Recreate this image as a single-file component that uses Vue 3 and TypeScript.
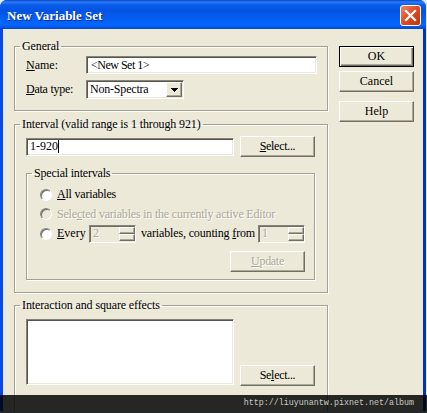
<script setup lang="ts">
import { ref } from 'vue'

const name = ref('<New Set 1>')
const dataType = ref('Non-Spectra')
const interval = ref('1-920')
const step = ref(2)
const start = ref(1)
</script>

<template>
    <div class="screen">
        <div class="dialog" role="dialog" aria-label="New Variable Set">
            <header class="titlebar">
                <span class="title">New Variable Set</span>
                <button class="close" aria-label="Close">
                    <svg width="21" height="21" viewBox="0 0 21 21">
                        <defs>
                            <linearGradient id="closeFill" x1="0" y1="0" x2="1" y2="1">
                                <stop offset="0" stop-color="#ee8d70" />
                                <stop offset="0.45" stop-color="#df4f27" />
                                <stop offset="1" stop-color="#b93409" />
                            </linearGradient>
                        </defs>
                        <rect x="0.5" y="0.5" width="20" height="20" rx="2.5" fill="url(#closeFill)" stroke="#fff" />
                        <path d="M6 6 L15 15 M15 6 L6 15" stroke="#fff" stroke-width="2.2" stroke-linecap="square" />
                    </svg>
                </button>
            </header>

            <main class="client">
                <div class="groups">
                    <fieldset class="group general">
                        <legend>General</legend>
                        <div class="row name-row">
                            <label class="label"><u>N</u>ame:</label>
                            <div class="field name-field">{{ name }}</div>
                        </div>
                        <div class="row type-row">
                            <label class="label type-label"><u>D</u>ata type:</label>
                            <div class="field combo">
                                <span class="combo-text">{{ dataType }}</span>
                                <span class="combo-button">
                                    <svg width="7" height="4" viewBox="0 0 7 4" shape-rendering="crispEdges">
                                        <path d="M0 0 H7 L3.5 4 Z" fill="#000" />
                                    </svg>
                                </span>
                            </div>
                        </div>
                    </fieldset>

                    <fieldset class="group interval">
                        <legend class="interval-legend">Interval (valid range is 1 through 921)</legend>
                        <div class="row interval-row">
                            <div class="field interval-field">{{ interval }}<i class="caret"></i></div>
                            <button class="button select"><span><u>S</u>elect...</span></button>
                        </div>

                        <fieldset class="group special">
                            <legend class="special-legend">Special intervals</legend>
                            <div class="row option">
                                <i class="radio"></i>
                                <span class="all-text"><u>A</u>ll variables</span>
                            </div>
                            <div class="row option disabled">
                                <i class="radio off"></i>
                                <span class="selected-text">Sele<u>c</u>ted variables in the currently active Editor</span>
                            </div>
                            <div class="row option">
                                <i class="radio"></i>
                                <span class="every-text"><u>E</u>very</span>
                                <div class="spinner disabled">
                                    <span>{{ step }}</span>
                                    <div class="arrows"><i></i><i></i></div>
                                </div>
                                <span class="counting-text">variables, counting <u>f</u>rom</span>
                                <div class="spinner disabled">
                                    <span>{{ start }}</span>
                                    <div class="arrows"><i></i><i></i></div>
                                </div>
                            </div>
                            <button class="button update disabled" disabled><span><u>U</u>pdate</span></button>
                        </fieldset>
                    </fieldset>

                    <fieldset class="group effects">
                        <legend class="effects-legend">Interaction and square effects</legend>
                        <div class="row effects-row">
                            <div class="field list"></div>
                            <button class="button select"><span>Se<u>l</u>ect...</span></button>
                        </div>
                    </fieldset>
                </div>

                <div class="actions">
                    <button class="button default"><span>OK</span></button>
                    <button class="button"><span>Cancel</span></button>
                    <button class="button help"><span>Help</span></button>
                </div>
            </main>
        </div>
        <footer class="watermark">http://liuyunantw.pixnet.net/album</footer>
    </div>
</template>

<style>
body {
    margin: 0;
    overflow: hidden;
}
</style>

<style scoped>
* {
    box-sizing: border-box;
}

.screen {
    position: relative;
    width: 427px;
    height: 413px;
    overflow: hidden;
    background: #dfe8f8;
    font: 12px/15px "Liberation Serif", serif;
    color: #000;
    white-space: nowrap;
}

.dialog {
    width: 426px;
    height: 411px;
    display: flex;
    flex-direction: column;
    border-radius: 7px 7px 0 0;
    overflow: hidden;
    background: #0a3fd8;
}

.titlebar {
    flex: none;
    height: 29px;
    display: flex;
    align-items: center;
    justify-content: space-between;
    padding: 2px 5px 0 7px;
    background: linear-gradient(#0842c0 0, #2a7dfa 2px, #0a5cea 5px, #0353e2 11px, #0460f5 20px, #0566ff 25px, #0347cf 29px);
}

.title {
    color: #fff;
    font-weight: bold;
    font-size: 13px;
    text-shadow: 1px 1px 0 #0a2b8c;
}

.close {
    width: 21px;
    height: 21px;
    padding: 0;
    border: 0;
    background: none;
}

.close svg {
    display: block;
}

.client {
    flex: 1;
    display: flex;
    gap: 11px;
    padding: 10px 9px 0 11px;
    margin-bottom: 2px;
    background: #ece9d8;
    border: solid #0848e8;
    border-width: 0 3px;
    border-right-color: #0530b8;
}

.groups {
    width: 314px;
}

.group {
    margin: 0;
    min-width: 0;
    padding: 0 9px 0 11px;
    border: 1px solid #a3a092;
    box-shadow: 1px 1px 0 #fff, inset 1px 1px 0 #fff;
}

legend {
    margin-left: -6px;
    padding: 0 2px;
    height: 15px;
    letter-spacing: -0.12px;
}

.general {
    height: 72px;
}

.interval {
    height: 176px;
    margin-top: 6px;
}

.effects {
    height: 130px;
    margin-top: 5px;
}

.row {
    display: flex;
    align-items: center;
}

.name-row {
    padding-top: 2px;
}

.type-row {
    padding-top: 6px;
}

.label {
    width: 60px;
}

.type-label {
    letter-spacing: -0.25px;
}

u {
    text-underline-offset: 1px;
    text-decoration-thickness: 1px;
}

.field {
    background: #fff;
    border: 1px solid;
    border-color: #85827a #fff #fff #85827a;
    box-shadow: inset 1px 1px 0 #56544c, inset -1px -1px 0 #ece9d8;
    padding: 0 4px;
    display: flex;
    align-items: center;
}

.name-field {
    width: 231px;
    height: 18px;
    letter-spacing: -0.5px;
}

.combo {
    width: 98px;
    height: 19px;
    padding: 0 1px 0 3px;
    justify-content: space-between;
}

.combo-text {
    letter-spacing: -0.2px;
}

.combo-button {
    width: 16px;
    height: 15px;
    display: flex;
    align-items: center;
    justify-content: center;
    background: #ece9d8;
    border: 1px solid;
    border-color: #fff #716f64 #716f64 #fff;
    box-shadow: inset -1px -1px 0 #aca899;
}

.interval-row {
    padding-top: 4px;
    gap: 6px;
}

.interval-field {
    width: 208px;
    height: 18px;
    padding-left: 3px;
}

.caret {
    width: 1px;
    height: 13px;
    background: #000;
}

.button {
    width: 75px;
    height: 21px;
    padding: 0;
    font: inherit;
    color: #000;
    background: #ece9d8;
    border: 1px solid;
    border-color: #fff #716f64 #716f64 #fff;
    box-shadow: inset -1px -1px 0 #aca899;
}

.button.default {
    border-color: #000;
    box-shadow: inset 1px 1px 0 #fff, inset -1px -1px 0 #716f64, inset -2px -2px 0 #aca899;
}

.select {
    letter-spacing: -0.3px;
}

.special {
    height: 114px;
    width: 289px;
    margin-top: 9px;
    padding: 0 8px 0 13px;
}

.special > legend {
    margin-left: -8px;
    letter-spacing: -0.2px;
}

.special > .option:first-of-type {
    margin-top: 4px;
}

.option {
    height: 19.5px;
}

.disabled {
    color: #aca899;
    text-shadow: 1px 1px 0 #fff;
}

.all-text {
    letter-spacing: -0.2px;
}

.selected-text {
    letter-spacing: -0.2px;
}

.radio {
    flex: none;
    width: 12px;
    height: 12px;
    margin-right: 5px;
    border-radius: 50%;
    border: 1px solid;
    border-color: #85827a #fff #fff #85827a;
    background: #fff;
    box-shadow: inset 1px 1px 0 #716f64;
}

.radio.off {
    background: #ece9d8;
}

.every-text {
    flex: none;
    width: 32px;
}

.counting-text {
    flex: none;
    width: 122px;
    padding-left: 5px;
    letter-spacing: -0.15px;
}

.spinner {
    flex: none;
    width: 47px;
    height: 18px;
    display: flex;
    justify-content: space-between;
    align-items: center;
    padding: 0 0 0 3px;
    border: 1px solid;
    border-color: #85827a #fff #fff #85827a;
    box-shadow: inset 1px 1px 0 #716f64;
}

.arrows {
    width: 16px;
    height: 14px;
    margin-top: 1px;
    display: flex;
    flex-direction: column;
}

.arrows i {
    flex: 1;
    border: 1px solid;
    border-color: #fff #716f64 #716f64 #fff;
    box-shadow: inset -1px -1px 0 #aca899;
}

.update {
    display: block;
    margin: 7px 1px 0 auto;
    letter-spacing: -0.3px;
}

.update.disabled {
    color: #aca899;
}

.effects-row {
    padding-top: 6px;
    gap: 6px;
    align-items: flex-end;
}

.list {
    width: 208px;
    height: 66px;
}

.effects-row .button {
    margin-bottom: -1px;
}

.actions {
    display: flex;
    flex-direction: column;
    gap: 4px;
    padding-top: 7px;
}

.help {
    margin-top: 5px;
}

.watermark {
    position: absolute;
    left: 0;
    right: 0;
    bottom: 0;
    height: 18px;
    padding-right: 13px;
    text-align: right;
    font: 8.35px/16px "Liberation Mono", monospace;
    color: #c9c9c9;
    background: rgba(0, 0, 0, 0.84);
}
</style>
